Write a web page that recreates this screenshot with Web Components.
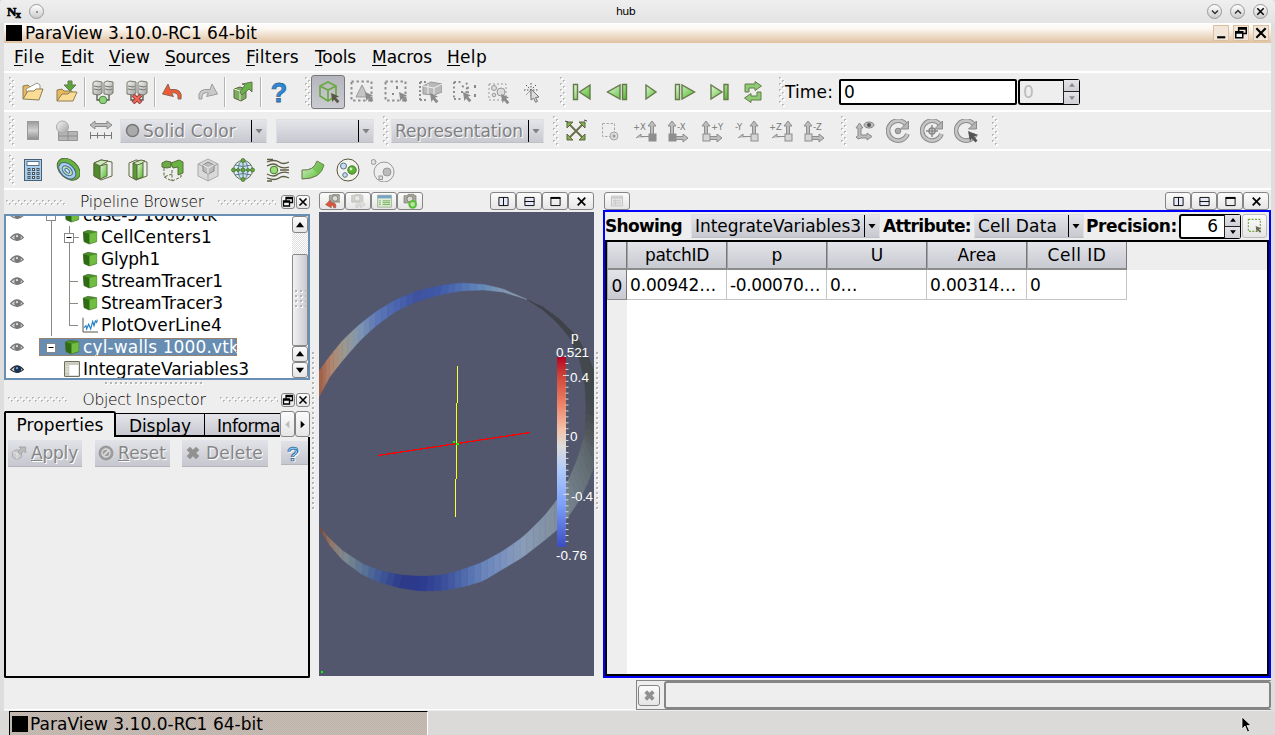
<!DOCTYPE html>
<html lang="en"><head><meta charset="utf-8"><title>hub</title>
<style>html,body{margin:0;height:100%;overflow:hidden;background:#dcdcdc}</style></head>
<body><app-window></app-window>
<script>
const R=(n,f)=>customElements.define(n,class extends HTMLElement{
  connectedCallback(){ if(this.shadowRoot) return; this.attachShadow({mode:'open'}).innerHTML=f(this); }
});
const A=(e,k,d='')=>e.getAttribute(k)??d;
const F='"DejaVu Sans",sans-serif';

/* ---------- icon library, 24x24 ---------- */
const G='<defs><linearGradient id="g" x2="1" y2="1"><stop offset="0" stop-color="#e4f6dc"/><stop offset="1" stop-color="#4fbb28"/></linearGradient><linearGradient id="s" x2="1" y2="1"><stop offset="0" stop-color="#f4f4f4"/><stop offset="1" stop-color="#a4a4a4"/></linearGradient></defs>';
const arrow=(x,y,c='#8b8b8b')=>`<path d="M${x} ${y}l8 3.5-3 1.2 3.4 3.6-2.2 2-3.2-3.8-1.6 2.8z" fill="${c}"/>`;
const dash='<rect x="1.5" y="1.5" width="20" height="19" fill="none" stroke="#8f8f8f" stroke-width="2" stroke-dasharray="2.4 2.6"/>';
const srv=`<g stroke="#77776c" fill="url(#s)"><path d="M2 2.500l3-1.500 6 1v11l-3 2-6-1z"/><path d="M13 2.500l3-1.500 6 1v11l-3 2-6-1z"/></g><path d="M3 6l5 1 2-1M14 6l5 1 2-1M3 9l5 1 2-1M14 9l5 1 2-1" stroke="#77776c" fill="none"/><path d="M6 15v5h12v-5" fill="none" stroke="#55554c" stroke-width="1.300"/>`;
const vp=(sx,up,lab)=>{const x=sx>0?5:19,e=sx>0?22:2;return `<g fill="#bdbdbd" stroke="#8d8d8d"><path d="M${x-1.5} 16V7h-2.500l4-5 4 5h-2.500v9z"/><path d="M${x} 17.500h${sx*11}v-2.500l${sx*5} 4-${sx*5} 4v-2.500h${-sx*11}z"/><rect x="${x-3}" y="15" width="7" height="7" fill="${up?'#d5d5d5':'#8e8e8e'}"/></g><text x="${sx>0?10:0}" y="11" style="font:8.500px ${F.replace(/"/g,"'")}" fill="#777">${lab}</text>`};
const cube=(x='')=>`<g stroke="#5d6b3c"><path d="M3 5l7-3 11 2v14l-11 4-7-4z" fill="none"/>${x}</g>`;
const rot=`<path d="M20 5.500A10 10 0 1 0 21.500 15" fill="none" stroke="#8b8b8b" stroke-width="4.600"/><path d="M20 5.500A10 10 0 1 0 21.500 15" fill="none" stroke="#c4c4c4" stroke-width="2.600"/><path d="M22.500 2v8h-8z" fill="#b5b5b5" stroke="#8b8b8b"/>`;
const cam='<path d="M3 4h5l1-2h9v2h3v11H3z" fill="#aaa99c" stroke="#77776c"/><circle cx="12" cy="9" r="4.500" fill="#ddd" stroke="#66665c"/>';
const I={
open:'<path d="M2 19V6l5-1 2 2h8v3" fill="#e9b95c" stroke="#8b7d57"/><path d="M5 9l11-6 3 2v9L7 18z" fill="#fff" stroke="#99978a"/><path d="M2 19l5-8h6l2-2h7l-4 11z" fill="#fbdc95" stroke="#8b7d57"/>',
load:'<path d="M2 21V10l5-1 2 2h8v3" fill="#e9b95c" stroke="#8b7d57"/><path d="M2 21l5-7h6l2-2h7l-4 9z" fill="#fbdc95" stroke="#8b7d57"/><path d="M13 1h4v4h4l-6 6-6-6h4z" fill="#57a83b" stroke="#6b7550"/>',
conn:srv+'<circle cx="12" cy="20" r="3.800" fill="#8bd27a" stroke="#4c8142"/>',
disc:srv+'<path d="M8 15l8 8M16 15l-8 8" stroke="#8d4239" stroke-width="4"/><path d="M8.500 15.500l7 7M15.500 15.500l-7 7" stroke="#ef6659" stroke-width="2.400"/>',
undo:'<path d="M20 19Q22 8 9 9.500L7 4 1.500 14l11 2.500L10.500 13Q18 11.500 17 19z" fill="#ee5a33" stroke="#8a6553"/>',
redo:'<path d="M4 19Q2 8 15 9.500L17 4l5.500 10-11 2.500L13.500 13Q6 11.500 7 19z" fill="#c9c9c9" stroke="#9c9c9c"/>',
expo:'<path d="M3 9l6-2 6 2v9l-5 3-7-3z" fill="#7cab60" stroke="#5b6941"/><path d="M9 11v9M3 9l6 2 6-2" stroke="#e4eede" fill="none"/><path d="M9 12l5-7-3-1 10-2v10l-3-3-7 6z" fill="#67b548" stroke="#66704f"/>',
help:'<text x="12" y="22" text-anchor="middle" style="font:bold 27px \'Liberation Sans\',sans-serif" fill="#258de8" stroke="#40627d" stroke-width=".8">?</text>',
selon:'<path d="M4 6l8-4 8 4v10l-8 5-8-5zM4 6l8 4 8-4M12 10v10" fill="none" stroke="#69a83d" stroke-width="1.600"/>'+arrow(15,13,'#595847'),
seltri:dash+'<path d="M12 5l6 12H6z" fill="#c4c4c4" stroke="#999"/>'+arrow(15,12),
selrect:dash+'<path d="M12 6h2v3h-2zM8 13h2v2H8z" fill="#888"/>'+arrow(15,12),
selfr:'<path d="M2 2h6M2 2v18M2 20h8" stroke="#8f8f8f" stroke-width="2" stroke-dasharray="2 2" fill="none"/><path d="M5 6l8-4 11 2v8l-8 3-11-1z" fill="#b9b9b9" stroke="#999"/><path d="M5 6l11 2 8-4M16 8v7M10 4v10" stroke="#eee" fill="none"/>'+arrow(12,13),
selpt:'<path d="M2 2h7M2 2v18M2 19h8M10 6l8 4M9 12h6M14 3l2 2v10" stroke="#8f8f8f" stroke-width="2" stroke-dasharray="2 2.500" fill="none"/><path d="M22 5h2v3h-2zM22 14h2v3h-2z" fill="#888"/>'+arrow(11,12),
selblk:'<rect x="3" y="4" width="17" height="16" fill="none" stroke="#999" stroke-dasharray="2 2"/><circle cx="8" cy="8" r="2.500" fill="#ddd" stroke="#999"/><circle cx="15" cy="12" r="4" fill="#ddd" stroke="#999"/><circle cx="8" cy="15" r="1.800" fill="#ddd" stroke="#999"/>'+arrow(15,14),
selpick:'<path d="M10 3v14M3 10h14M5 5l10 10M15 5L5 15" stroke="#555" stroke-dasharray="1.500 1.500"/><path d="M10 9l8 8-3.500.5 2 4-2 .7-1.700-4L10 20z" fill="#ddd" stroke="#777"/>',
first:'<path d="M2.500 4.500h4v15h-4zM19 5v14L8.500 12z" fill="url(#g)" stroke="#667a4b" stroke-width="1.400"/>',
prev:'<path d="M17.500 4.500h4v15h-4zM15 5v14L2.500 12z" fill="url(#g)" stroke="#667a4b" stroke-width="1.400"/>',
play:'<path d="M7 5v14l10-7z" fill="url(#g)" stroke="#667a4b" stroke-width="1.400"/>',
next:'<path d="M2.500 4.500h4v15h-4zM9 5v14l12.500-7z" fill="url(#g)" stroke="#667a4b" stroke-width="1.400"/>',
last:'<path d="M17 4.500h4v15h-4zM4 5v14l11-7z" fill="url(#g)" stroke="#667a4b" stroke-width="1.400"/>',
loop:'<path d="M4 12V4h10V1.500L20.500 6 14 10.500V8H8v4zM20 12v8H10v2.500L3.500 18 10 13.500V16h6v-4z" fill="#8ecb74" stroke="#667a4b"/>',
bar:'<defs><linearGradient id="b" y2="1" x2="0"><stop stop-color="#9c9c9c"/><stop offset=".5" stop-color="#d0d0d0"/><stop offset="1" stop-color="#8c8c8c"/></linearGradient></defs><rect x="6.500" y="2.500" width="11" height="18" fill="url(#b)" stroke="#999"/>',
edit:'<path d="M3.500 12.500h19v9h-19z" fill="#b5b5b5" stroke="#959595"/><path d="M13 13v8M4 17h18" stroke="#8b8b8b"/><circle cx="7.500" cy="8" r="6" fill="url(#s)" stroke="#aaa"/>',
scale:'<path d="M1 6l5-4v2.500h12V2l5 4-5 4V7.500H6V10z" fill="#bbb" stroke="#8b8b8b"/><path d="M1 16.500h22M1.500 13v7M8.500 13.500v6M15.500 13.500v6M22.500 13v7" stroke="#777"/>',
reset:'<path d="M6 6l12 12M18 6L6 18" stroke="#6c704f" stroke-width="2"/><path d="M3 3h6L3 9zM21 3v6l-6-6zM3 21v-6l6 6zM21 21h-6l6-6z" fill="#7fb347" stroke="#5e6545"/><path d="M1 2l3 1M20 1l3 1" stroke="#444"/>',
zoomb:'<rect x="3.500" y="4.500" width="12" height="13" fill="none" stroke="#a9a9a9" stroke-dasharray="2.500 1.500"/><circle cx="15" cy="17" r="4" fill="#ddd" stroke="#a5a5a5"/><circle cx="15" cy="17" r="1.500" fill="#999"/>',
px:vp(-1,0,'+X'),mx:vp(1,0,'-X'),py:vp(1,1,'+Y'),my:vp(-1,1,'-Y'),pz:vp(-1,1,'+Z'),mz:vp(1,1,'-Z'),
axes:'<g fill="#bbb" stroke="#8b8b8b"><path d="M6 17V9H4l3.500-5L11 9H9v7h6v-2l5 3.500-5 3.500v-2H9l-3 1-2-2z"/></g><ellipse cx="17" cy="6" rx="5" ry="3" fill="#bbb" stroke="#888"/><circle cx="17" cy="6" r="2" fill="#555"/>',
rc:rot+'<circle cx="12" cy="12" r="2.800" fill="#aaa" stroke="#888"/>',
rp:rot+'<circle cx="12" cy="12" r="3" fill="none" stroke="#888" stroke-width="1.500"/><path d="M12 6v12M6 12h12" stroke="#888" stroke-width="1.500"/>',
rk:rot+'<path d="M14 12l10 4-4 1.500 3.500 4-2 2-4-4-1.500 3z" fill="#555"/>',
calc:'<rect x="3.500" y="1.500" width="17" height="21" fill="#a9cee9" stroke="#47607a"/><rect x="6" y="3.500" width="12" height="4" fill="#fff" stroke="#5d7287"/><path d="M6.500 11.500h12M6.500 15.500h12M6.500 19.500h12" stroke="#46535f" stroke-width="3" stroke-dasharray="3 1.500"/><path d="M7.500 11.500h11M7.500 15.500h11M7.500 19.500h11" stroke="#fff" stroke-dasharray="1 3.500"/>',
contour:'<g transform="rotate(42 12 12)"><ellipse cx="12" cy="11" rx="13" ry="9" fill="#67b541" stroke="#516c38"/><ellipse cx="12" cy="13" rx="10" ry="6.500" fill="#a9cdea" stroke="#47627d"/><ellipse cx="12" cy="13" rx="6" ry="3.800" fill="#c8e2a8" stroke="#3c70a8"/><ellipse cx="12" cy="13" rx="3" ry="1.500" fill="#dcebf7" stroke="#3c70a8"/></g>',
clip:cube('<path d="M3 5l6 3v13l-6-3z" fill="#4e8b2b"/><path d="M3 5l7-3 7 1-8 5z" fill="#cde8bd"/><path d="M9 8l7-2v12l-7 3z" fill="url(#g)"/>'),
slice:cube('<path d="M7 5l8-3 4 1-7 5z" fill="#cde8bd"/><path d="M7 5l4 2v15l-4-2z" fill="#5a9b33"/><path d="M11 7l6-2v14l-6 2z" fill="url(#g)"/>'),
thr:'<g stroke="#5d6b3c"><path d="M3 10v9l8 4 9-4v-5M11 12v11M11 16l-8 3" fill="none" stroke-dasharray="3 1.500"/><path d="M1 5l4-2 5 1v5l-4 1-5-1z" fill="#6aac45"/><path d="M10 5l8-3 4 2v11l-5 2V9l-5 1z" fill="#67b541"/></g>',
extr:'<path d="M2 6l10-5 10 5v12l-10 5-10-5z" fill="#d9d9d9" stroke="#aaa"/><path d="M2 6l10 5 10-5M12 11v12" fill="none" stroke="#a8a8a8"/><path d="M7 7l5-3 6 3v6l-6 3-5-3z" fill="#bbb" stroke="#888"/><path d="M7 7l5 3 6-3M12 10v6" fill="none" stroke="#eee"/>',
glyph:'<circle cx="12" cy="12" r="9.500" fill="#e0eef7" stroke="#5d6b4c"/><ellipse cx="12" cy="12" rx="5" ry="9.500" fill="#c1dced" stroke="#5b7a8c"/><path d="M1 12h22M12 2v20" stroke="#5d7a6c"/><path d="M4 7q8 3 16 0M4 17q8-3 16 0" stroke="#5b7a8c" fill="none"/><g fill="#63ad38" stroke="#3d6428" stroke-width=".7"><circle cx="12" cy="2.500" r="2"/><circle cx="12" cy="12" r="2"/><circle cx="12" cy="21.500" r="2"/><circle cx="2.500" cy="12" r="2"/><circle cx="21.500" cy="12" r="2"/><circle cx="7" cy="12" r="1.500"/><circle cx="17" cy="12" r="1.500"/></g>',
stream:'<path d="M1 4q8-3 12 0t10 0M1 8q7-4 11 0 5 3 11 1M1 20q8 3 12 0t10 0M1 16q7 4 11 0 5-3 11-1M14 12h9M1 1.500h6M1 23h5" fill="none" stroke="#5d5d43" stroke-width="1.300"/><circle cx="8" cy="12" r="3.800" fill="#9bdc79" stroke="#3f7c29"/>',
warp:'<path d="M1 12q12 1 15-9l7 4q-3 14-22 14z" fill="url(#g)" stroke="#66704b"/><path d="M16 3l7 4q-2 6-6 9l-6-6q4-2 5-7z" fill="#67b541" opacity=".6"/>',
group:'<circle cx="12" cy="12" r="11" fill="#f4f4ee" stroke="#55553f"/><circle cx="7.500" cy="8" r="3" fill="#c6def0" stroke="#5a7184"/><circle cx="16" cy="12" r="4.200" fill="#57b830" stroke="#55703b"/><circle cx="9" cy="17" r="2.300" fill="#c6def0" stroke="#5a7184"/><circle cx="15" cy="11" r="1.400" fill="#cdeebd"/>',
level:'<circle cx="13" cy="14" r="10" fill="none" stroke="#999"/><circle cx="2.500" cy="4" r="2.500" fill="#ddd" stroke="#999"/><circle cx="16" cy="14" r="4" fill="#bbb" stroke="#999"/><rect x="8" y="18" width="3.500" height="3.500" fill="#ddd" stroke="#999"/>',
box:'<path d="M2 4.500L9 2l13 2v15l-11 3.500L3 19z" fill="#4a9127" stroke="#45672f"/><path d="M11 7.500L22 5v13.500L11 22z" fill="#70bd42"/><path d="M2 4.500l9 3v15L3 18.500z" fill="#2f6a15"/>',
plot:'<path d="M1.500 1v21.500H24" fill="none" stroke="#555541" stroke-width="1.500"/><path d="M3 16l3-3 1 5 3-7 3 7 3-11 2 6 2-7 2 2 1-4" fill="none" stroke="#2b83c6" stroke-width="1.800"/>',
sheet:'<path d="M1 1h22v22H1z" fill="#fff" stroke="#55553f" stroke-width="1.500"/><path d="M2 2h6v20H2zM8 2h14v4H8z" fill="#c9c9bd"/><path d="M3 8h4M3 12h4M3 16h4" stroke="#fff"/>',
eye:'<path d="M1 13Q12 0 23 13 12 23 1 13z" fill="#d5d5d5" stroke="#777" stroke-width="2"/><circle cx="13" cy="12.500" r="5.500" fill="#777"/><circle cx="12" cy="10.500" r="2" fill="#ddd"/>',
eyeon:'<path d="M1 13Q12 0 23 13 12 23 1 13z" fill="#d5d5d5" stroke="#333" stroke-width="2"/><circle cx="13" cy="12.500" r="6" fill="#1b3050"/><circle cx="12" cy="10.500" r="2" fill="#67a0dd"/>',
x:'<path d="M5 5l14 14M19 5L5 19" stroke="#000" stroke-width="3.200"/>',
gx:'<path d="M5 5l14 14M19 5L5 19" stroke="#919191" stroke-width="7"/>',
restore:'<path d="M8 3h13v10H8zM8 5h13" fill="none" stroke="#000" stroke-width="2.600"/><path d="M3 10h12v10H3zM3 12h12" fill="#f4f4f4" stroke="#000" stroke-width="2.600"/>',
min:'<path d="M4 19h15" stroke="#000" stroke-width="4"/>',
sph:'<path d="M3.500 4.500h17v15h-17zM12 4v16" fill="#e6e9f8" stroke="#000" stroke-width="1.700"/>',
spv:'<path d="M3.500 4.500h17v15h-17zM3 12h18" fill="#e6e9f8" stroke="#000" stroke-width="1.700"/>',
max:'<path d="M3.500 4.500h17v15h-17z" fill="none" stroke="#000" stroke-width="1.700"/><path d="M3 5.500h18" stroke="#000" stroke-width="3.500"/>',
camu:'<g transform="translate(4 -2)">'+cam+'</g><path d="M17 22q2-9-7-8l-2-4-7 7 9 5v-4q4-1 4 4z" fill="#e05438" stroke="#8a5548"/>',
camr:'<g opacity=".45"><g transform="translate(-2 -2)">'+cam+'</g><path d="M8 22q-2-9 7-8l2-4 6 7-8 5v-4q-4-1-4 4z" fill="#ccc" stroke="#999"/></g>',
sett:'<path d="M1 2h22v19H1z" fill="#dff0d4" stroke="#819873"/><path d="M1 2h22v5H1z" fill="#79a3c7"/><path d="M9 11h12M9 14h12M9 17h12" stroke="#6ea858" stroke-width="1.500"/><path d="M3 11h3M3 14h3M3 17h3" stroke="#99b38b" stroke-width="2"/>',
capt:cam+'<circle cx="16" cy="17" r="5" fill="#b6e69f" stroke="#5cbd3d" stroke-width="3"/>',
gsheet:'<path d="M2.500 3.500h19v17h-19z" fill="#e7e7e7" stroke="#aaa"/><path d="M3 5h18v3H3z" fill="#ccc"/><path d="M5 11h14M5 14h14M5 17h14M9 9v10" stroke="#bbb"/>',
sel:'<rect x="2" y="2" width="18" height="18" fill="none" stroke="#76a843" stroke-width="1.700" stroke-dasharray="3 2"/>'+arrow(13,12,'#66664f'),
gexpo:'<path d="M2 10l7-3 7 3v8l-7 4-7-4z" fill="#ccc" stroke="#999"/><path d="M2 10l7 3 7-3M9 13v9" stroke="#eee" fill="none"/><path d="M10 10l5-5-3-2h10v9l-3-3-5 5z" fill="#bbb" stroke="#999"/>',
no:'<circle cx="12" cy="12" r="10.500" fill="#9d9d9d" stroke="#888"/><circle cx="12" cy="12" r="6" fill="none" stroke="#ddd" stroke-width="2"/><path d="M8 16l9-9" stroke="#ddd" stroke-width="2.500"/>',
dn:'<path d="M5 8h14l-7 9z" fill="currentColor"/>',up:'<path d="M5 16h14l-7-9z" fill="currentColor"/>',
lt:'<path d="M16 4v16L7 12z" fill="currentColor"/>',rt:'<path d="M8 4v16l9-8z" fill="currentColor"/>',
chd:'<path d="M6 9l6 6 6-6" fill="none" stroke="#333" stroke-width="3"/>',chu:'<path d="M6 15l6-6 6 6" fill="none" stroke="#333" stroke-width="3"/>',
dot:'<circle cx="12" cy="12" r="2" fill="#777"/>'
};
const svg=(n,s=24)=>`<svg width="${s}" height="${s}" viewBox="0 0 24 24">${/#[gs]\)/.test(I[n])?G:''}${I[n]}</svg>`;

R('ui-icon',e=>`<style>:host{display:inline-flex;align-items:center;justify-content:center;flex:none}svg{display:block}</style>${svg(A(e,'n'),A(e,'s',24))}`);
R('tool-icon',e=>`<style>:host{display:flex;box-sizing:border-box;flex:none;width:${A(e,'w',34)}px;height:34px;align-items:center;justify-content:center}:host([on]){background:linear-gradient(#b5b6bd,#cbccd2);border:1px solid #77777c;border-radius:3px}svg{display:block}</style>${svg(A(e,'n'))}`);
const dots=(w,h)=>`<svg width="${w}" height="${h}"><defs><pattern id="p" width="6" height="6" patternUnits="userSpaceOnUse"><path d="M0 0h2v2H0zM3 3h2v2H3z" fill="#b9b9b9"/><path d="M1 1h2v2H1zM4 4h2v2H4z" fill="#fff"/></pattern></defs><rect width="${w}" height="${h}" fill="url(#p)"/></svg>`;
R('dot-grip',e=>`<style>:host{display:block;flex:none;width:${A(e,'w',6)}px;height:${A(e,'h',30)}px}svg{display:block}</style>${dots(A(e,'w',6),A(e,'h',30))}`);
R('dot-line',e=>{const w=A(e,'w',5),h=A(e,'h',5);return `<style>:host{display:block;flex:none;width:${w}px;height:${h}px}svg{display:block}</style><svg width="${w}" height="${h}"><defs><pattern id="q" width="5" height="5" patternUnits="userSpaceOnUse"><path d="M0 0h2v2H0z" fill="#b4b4b4"/><path d="M2 1h1v2H1V2h1z" fill="#fff"/></pattern></defs><rect width="${w}" height="${h}" fill="url(#q)"/></svg>`});
R('tool-sep',()=>`<style>:host{display:block;flex:none;box-sizing:border-box;width:2px;height:30px;background:#b4b4b4;border-right:1px solid #fff}</style>`);
R('sp-ace',e=>`<style>:host{display:block;flex:none;width:${A(e,'w')}px}</style>`);
R('tool-bar',()=>`<style>:host{display:flex;align-items:center;box-sizing:border-box;height:39px;border-bottom:2px solid #fff;border-image:linear-gradient(#b4b4b4 50%,#fff 50%) 2;border-width:0 0 2px;padding-left:5px}</style><slot></slot>`);
R('combo-box',e=>`<style>:host{display:flex;flex:none;box-sizing:border-box;width:${A(e,'w')}px;height:24px;align-items:center;background:linear-gradient(#e4e5ea,#c8c9d0);border:1px solid #dfe0e4;border-bottom-color:#bfc0c6;color:#000}:host([off]){color:#808080;text-shadow:1px 1px 0 #fff}.t{flex:1;display:flex;align-items:center;padding-left:${A(e,'p',3)}px;gap:3px;min-width:0}.a{width:14px;height:22px;border-left:1px solid #000;display:flex;align-items:center;justify-content:center}</style><div class="t"><slot></slot></div><div class="a">${svg('dn',12)}</div>`);
R('view-button',e=>`<style>:host{display:flex;flex:none;box-sizing:border-box;width:${A(e,'w',26)}px;height:${A(e,'h',18)}px;border:1px solid #858585;border-radius:3px;background:linear-gradient(#fbfbfb,#e6e6e6);align-items:center;justify-content:center;color:#000}:host([off]){color:#bbb}svg{display:block}</style>${svg(A(e,'n'),A(e,'s',13))}`);
R('push-button',e=>`<style>:host{display:flex;flex:none;box-sizing:border-box;width:${A(e,'w')}px;height:${A(e,'h',27)}px;align-items:center;padding-left:3px;gap:4px;background:linear-gradient(#e2e3e8,#c6c7cf);border-bottom:1px solid #b4b5bb;color:#858585;text-shadow:1px 1px 0 #fff}svg{display:block}</style>${svg(A(e,'n'),A(e,'s',16))}<slot></slot>`);
R('spin-box',e=>`<style>:host{display:flex;flex:none;box-sizing:border-box;width:${A(e,'w')}px;height:${A(e,'h',26)}px;border:2px solid #000;border-radius:3px;background:${A(e,'bg','#fff')};color:${A(e,'c','#000')}}.v{flex:1;display:flex;align-items:center;justify-content:${A(e,'j','flex-start')};padding:0 3px}.b{width:15px;margin:-1px -1px -1px 0;display:grid;grid-template-rows:1fr 1fr;gap:1px;background:#222;border-left:1px solid #222;color:${A(e,'ac','#000')}}.b div{background:linear-gradient(#e4e4e9,#cfd0d6);display:flex;align-items:center;justify-content:center;min-height:0}</style><div class="v"><slot></slot></div><div class="b"><div>${svg('up',10)}</div><div>${svg('dn',10)}</div></div>`);
R('dock-title',e=>`<style>:host{display:flex;align-items:center;height:${A(e,'h',24)}px;padding-left:${A(e,'l',2)}px}.t{width:153px;display:flex;justify-content:center;font-weight:200;font-size:15.500px}</style><dot-grip w="60" h="5"></dot-grip><div class="t"><slot></slot></div><dot-grip w="58" h="5"></dot-grip><sp-ace w="${A(e,'g',5)}"></sp-ace><view-button w="14" h="14" n="restore" s="12"></view-button><sp-ace w="1"></sp-ace><view-button w="14" h="14" n="x" s="12"></view-button>`);

/* one pipeline row: guide lines, optional expander, icon, name */
R('tree-row',e=>{
  const d=A(e,'d'),bx=+A(e,'box',0),ix=+A(e,'ix');
  return `<style>:host{display:flex;height:22px;align-items:center}svg{display:block;flex:none}.e{width:${33-0}px;padding-left:4px;box-sizing:border-box}.r{display:flex;align-items:center;height:18px;box-sizing:border-box;margin-right:auto}:host([sel]) .r{background:linear-gradient(#678db2,#678db2);color:#fff;outline:1px dotted #bb7a3c;outline-offset:-1px;width:198px}.n{padding-left:3px}.i{width:16px}</style>
  <div class="e">${svg(e.hasAttribute('vis')?'eyeon':'eye',14)}</div><div class="r"><svg width="${ix-33-6}" height="22" viewBox="39 0 ${ix-39-6} 22"><path d="${d}" fill="none" stroke="#8a8a84" shape-rendering="crispEdges"/>${bx?`<path d="M${bx-4.5} 7h9v9h-9z" fill="#fff" stroke="#888" shape-rendering="crispEdges"/><path d="M${bx-2.5} 11.500h5" stroke="#000"/>`:''}</svg><div class="i">${svg(A(e,'i','box'),16)}</div><div class="n"><slot></slot></div></div>`});

R('scroll-bar',()=>`<style>:host{display:flex;flex-direction:column;width:16px;background:repeating-conic-gradient(#ddd 0 25%,#fff 0 50%) 0 0/2px 2px}.s{height:21px}.th{flex:1;box-sizing:border-box;border:1px solid #8a8a8a;border-radius:2px;background:linear-gradient(90deg,#f2f2f4,#c9cad0);display:flex;align-items:center;justify-content:center}</style><view-button w="16" h="17" n="up" s="14"></view-button><div class="s"></div><div class="th"><dot-line w="11" h="20"></dot-line></div><view-button w="16" h="16" n="up" s="14"></view-button><view-button w="16" h="16" n="dn" s="14"></view-button>`);

/* render view */
const lerp=(a,b,t)=>a+(b-a)*t;
function at(ps,t){const f=t*(ps.length-1),i=Math.min(ps.length-2,f|0),u=f-i;return ps[i].map((v,k)=>lerp(v,ps[i+1][k],u));}
function band(o,n,c,k){let s='';for(let i=0;i<k;i++){const a=at(o,i/k),b=at(o,(i+1)/k),d=at(n,i/k),e=at(n,(i+1)/k),q=at(c,(i+.5)/k).map(Math.round);
  s+=`<path d="M${a}L${b}L${e}L${d}z" fill="rgb(${q})" stroke="rgb(${q})" stroke-width=".4"/>`}return s;}
const outA=[[319,371],[330,356],[343,340],[360,324],[377,311],[397,299],[417,291],[440,285.5],[460,283],[483,284.300],[503,289],[527,299.500]];
const inA=[[319,397],[330,376.500],[343,360],[360,340.500],[377,325],[397,310.500],[417,301.500],[437,295.500],[460,291],[483,290],[503,292],[527,299.500]];
const colA=[[156,92,66],[180,130,105],[158,152,140],[126,150,180],[92,120,182],[75,100,176],[62,82,160],[64,88,168],[80,112,178],[100,138,185],[130,152,178],[140,155,165]];
const outB=[[527,299.500],[543,307],[560,319.500],[577,336.500],[590,360],[597,380],[601,410],[600,438],[594,467],[587,485],[577,504],[567,518.300],[557,530],[543,541.500],[523,557],[503,569],[483,581],[463,587],[443,590.500],[420,591],[400,588],[380,582.500],[363,575],[343,560.500],[330,545.500],[319,527.500]];
const inB=[[527,299.500],[543,310],[557,322.500],[570,338],[580,361],[585,385],[586,408],[585,430],[583.300,440],[577,460],[568.500,480],[562,490],[557,500],[543,517.500],[523,537],[503,551],[483,562],[463,569.500],[443,575],[423,576.300],[403,575.300],[383,571.500],[363,564],[343,551],[330,539],[319,526.500]];
const colB=[[64,66,72],[62,65,72],[62,66,70],[64,69,73],[66,72,76],[65,72,75],[68,74,78],[80,86,90],[92,102,108],[103,114,122],[113,125,135],[122,135,145],[128,143,156],[132,148,168],[138,157,184],[122,146,190],[104,132,188],[80,106,172],[58,78,156],[44,58,142],[44,58,136],[62,86,152],[90,116,152],[130,138,142],[150,118,100],[128,70,46]];
R('render-view',()=>{let t='';for(let y=363.5;y<547;y+=5.93)t+=`M565.500 ${y}h3`;
 return `<style>:host{display:block;width:275px;height:464px}svg{display:block}text{font-family:"Liberation Sans",Arial,sans-serif;font-size:13.500px;fill:#fff}</style><svg width="275" height="464" viewBox="319 212 275 464"><defs><linearGradient id="c" x2="0" y2="1"><stop stop-color="#b40426"/><stop offset=".1" stop-color="#cf4538"/><stop offset=".25" stop-color="#ee8468"/><stop offset=".38" stop-color="#f3c1a8"/><stop offset=".47" stop-color="#dddcdb"/><stop offset=".6" stop-color="#afc9fc"/><stop offset=".78" stop-color="#7b9ff9"/><stop offset="1" stop-color="#3b4cc0"/></linearGradient></defs><path d="M319 212h275v464H319z" fill="#52576e"/>${band(outA,inA,colA,34)}${band(outB,inB,colB,76)}
 <g shape-rendering="crispEdges" fill="none"><path d="M457.500 366v37M456.500 403v76M455.500 479v38" stroke="#ff0"/><path d="M457.500 366v37M455.500 479v38" stroke="#fff" opacity=".2"/><path d="M378 455.500L530 432.500" stroke="red" stroke-width="1.300"/><path d="M453 442h2M456 444h3M321 672h2" stroke="#0f0" stroke-width="1.500"/></g>
 <path d="M557 357h9v190h-9z" fill="url(#c)"/><path d="${t}M563 375.500h6M563 434.500h6M563 494.500h6" stroke="#d8d8d8"/>
 <text x="571" y="341" textLength="8">p</text><text x="556" y="357" textLength="33">0.521</text><text x="570" y="382" textLength="19">0.4</text><text x="570" y="441">0</text><text x="571" y="501" textLength="22">-0.4</text><text x="556" y="560" textLength="31">-0.76</text></svg>`});

R('data-table',()=>`<style>:host{display:grid;grid-template-columns:20px repeat(5,100px) 1fr;grid-template-rows:28px 30px 1fr;box-sizing:border-box;border:solid #000;border-width:2px 2px 2px 2px;background:#fff;flex:1;min-height:0}
 div{box-sizing:border-box;display:flex;align-items:center;overflow:hidden}.h{background:linear-gradient(#e3e4e9,#c9cad1);border-right:1px solid #77777a;border-bottom:2px solid #8b8b8b;border-left:1px solid #a5a5a5;justify-content:center}.c{border-right:1px solid #c4c4c4;border-bottom:1px solid #c4c4c4;padding-left:3px}.g{background:#eee}.r{border-bottom-width:1px;padding-top:3px}</style>
 <div class="h"></div>${[['patchID',64],['p',11],['U',12],['Area',39],['Cell ID',59]].map(([a,w])=>`<div class="h"><fit-text w="${w}">${a}</fit-text></div>`).join('')}<div class="g"></div>
 <div class="h r"><fit-text w="10">0</fit-text></div>${[['0.00942…',86],['-0.00070…',90],['0…',27],['0.00314…',86],['0',10]].map(([a,w])=>`<div class="c"><fit-text w="${w}">${a}</fit-text></div>`).join('')}<div></div><div class="g"></div>`);

R('menu-item',e=>`<style>:host{display:block;flex:none;width:${A(e,'w')}px}</style><slot></slot>`);

R('pipeline-browser',()=>`<style>:host{display:flex;box-sizing:border-box;height:166px;width:306px;border:2px solid #6a8fb5;background:#fff;overflow:hidden}.t{flex:1;margin-top:-12px;min-width:0}scroll-bar{flex:none}</style><div class="t">
 <tree-row ix="64" box="48" d="M48 16v6"><fit-text w="134">case-5 1000.vtk</fit-text></tree-row>
 <tree-row ix="82" box="66" d="M48.500 0v22M66.500 0v22M71 11.500h5"><fit-text w="111">CellCenters1</fit-text></tree-row>
 <tree-row ix="82" d="M48.500 0v22M66.500 0v22M84 0v4"><fit-text w="59">Glyph1</fit-text></tree-row>
 <tree-row ix="82" d="M48.500 0v22M66.500 0v22M66 11.500h9"><fit-text w="122">StreamTracer1</fit-text></tree-row>
 <tree-row ix="82" d="M48.500 0v22M66.500 0v22M66 11.500h9"><fit-text w="122">StreamTracer3</fit-text></tree-row>
 <tree-row ix="82" i="plot" d="M48.500 0v22M66.500 0v12M66 11.500h9"><fit-text w="121">PlotOverLine4</fit-text></tree-row>
 <tree-row ix="64" box="48" sel d="M53 11.500h4"><fit-text w="156">cyl-walls 1000.vtk</fit-text></tree-row>
 <tree-row ix="64" i="sheet" vis d="M66.500 0v4"><fit-text w="166">IntegrateVariables3</fit-text></tree-row></div><scroll-bar></scroll-bar>`);

R('object-inspector',()=>`<style>:host{display:flex;flex-direction:column;width:306px;height:267px}.tabs{display:flex;height:26px;align-items:flex-end;flex:none}.tab{box-sizing:border-box;display:flex;align-items:center;justify-content:center;height:24px;background:linear-gradient(#e3e4e9,#c9cad1);border:solid #000;border-width:1px 1px 2px 0;padding-top:2px;overflow:hidden}.on{height:26px;background:#eee;border-width:2px 2px 0 2px;border-radius:2px 3px 0 0;width:112px;padding:0}.body{flex:1;box-sizing:border-box;border:solid #000;border-width:0 2px 2px;padding:3px 0 0 2px;border-radius:0 0 2px 2px}.row{display:flex;align-items:flex-start}</style>
 <div class="tabs"><div class="tab on"><fit-text w="87">Properties</fit-text></div><div class="tab" style="width:89px"><fit-text w="62">Display</fit-text></div><div class="tab" style="width:75px;justify-content:flex-start;padding-left:12px;border-right:0"><fit-text w="63">Informa</fit-text></div><view-button w="15" h="26" n="lt" s="11" off></view-button><view-button w="15" h="26" n="rt" s="11"></view-button></div>
 <div class="body"><div class="row"><push-button w="74" n="gexpo"><fit-text w="47"><u>A</u>pply</fit-text></push-button><sp-ace w="13"></sp-ace><push-button w="75" n="no"><fit-text w="48"><u>R</u>eset</fit-text></push-button><sp-ace w="12"></sp-ace><push-button w="86" n="gx" style="gap:5px"><fit-text w="57">Delete</fit-text></push-button><sp-ace w="13"></sp-ace><push-button w="27" h="24" n="help" s="18" style="margin-top:1px"></push-button></div></div>`);

const ic=(l)=>l.split(' ').map(n=>n=='|'?'<tool-sep></tool-sep>':n[0]=='_'?`<sp-ace w="${n.slice(1)}"></sp-ace>`:n=='G'?'<dot-grip></dot-grip>':`<tool-icon n="${n.split(':')[0]}" w="${n.split(':')[1]||34}"${n=='selon'?' on':''}></tool-icon>`).join('');
const winb='<view-button n="sph"></view-button><view-button n="spv"></view-button><view-button n="max"></view-button><view-button n="x"></view-button>';

R('app-window',()=>`<style>
:host{display:flex;flex-direction:column;width:1275px;height:735px;box-sizing:border-box;font:17px/20px ${F};color:#000;background:#dedede;overflow:hidden;position:relative}
.host{height:23px;display:flex;align-items:center;background:linear-gradient(#efefef,#e3e3e3);font-size:11px;border-radius:4px 4px 0 0;flex:none}
.rb{width:15px;height:15px;box-sizing:border-box;border:1px solid #999;border-radius:50%;background:linear-gradient(#fff,#ccc);display:flex;align-items:center;justify-content:center;flex:none}
.win{margin:0 4px;height:688px;background:#eee;display:flex;flex-direction:column;flex:none}
.pt{height:20px;display:flex;align-items:center;background:linear-gradient(#fff,#fbf6f0 30%,#e0c1a0);flex:none}
.sq{width:16px;height:16px;background:#000;flex:none}
.tb{width:16px;height:16px;background:#f2e6da;border:1px solid #dcbf9f;box-sizing:border-box;display:flex;align-items:center;justify-content:center;margin-right:4px}
.menu{height:29px;box-sizing:content-box;display:flex;align-items:center;padding-left:10px;border-bottom:2px solid #b4b4b4;border-image:linear-gradient(#b4b4b4 50%,#fff 50%) 2;border-width:0 0 2px;height:28px;flex:none}
.time{box-sizing:border-box;width:178px;height:26px;border:2px solid #000;border-radius:2px;background:#fff;display:flex;align-items:center;padding-left:3px}
.main{display:flex;height:488px;flex:none}
.left{width:306px;flex:none}.split{width:9px;display:flex;align-items:center;justify-content:center;flex:none;padding-bottom:5px;padding-top:0}
.vh{display:flex;height:18px;padding:2px 0;flex:none}.gap{flex:1}
.mid{width:275px;flex:none}.right{flex:1;display:flex;flex-direction:column;min-width:0}
.tv{flex:1;margin-top:-2px;border:2px solid #00f;display:flex;flex-direction:column;min-height:0;background:#eee}
.tt{display:flex;height:28px;align-items:center;flex:none}b{font-weight:bold}
.status{height:32px;display:flex;flex:none;box-sizing:border-box;padding:2px 0 0 632px;border-bottom:1px solid #fff}
.pf{flex:1;display:flex;box-sizing:border-box;height:30px;border:1px solid #858585;border-right:0;padding:0;align-items:center}.pg{flex:1;height:28px;box-sizing:border-box;border:2px solid #858585;border-radius:3px;margin-left:4px}
.task{flex:1;background:#dbdad8;display:flex;padding-left:9px}.ti{width:419px;box-sizing:border-box;border:solid #000;border-width:1px 0 0 1px;border-right:1px solid #fff;background:repeating-conic-gradient(#c9beb5 0 25%,#bdb2a9 0 50%) 0 0/2px 2px;display:flex;align-items:center;padding-left:2px}
.cur{position:absolute;left:1241px;top:716px}
u{text-underline-offset:2px;text-decoration-thickness:1px}
</style>
<div class="host"><sp-ace w="7"></sp-ace><fit-text w="13" style="font:bold 13px 'Liberation Serif',serif;-webkit-text-stroke:.6px #000">N<span style="font-size:11px;position:relative;top:2px">x</span></fit-text><sp-ace w="9"></sp-ace><div class="rb"><ui-icon n="dot" s="12"></ui-icon></div><div class="gap" style="flex:0 0 572px"></div><fit-text w="19">hub</fit-text><div class="gap"></div><div class="rb"><ui-icon n="chd" s="12"></ui-icon></div><sp-ace w="8"></sp-ace><div class="rb"><ui-icon n="chu" s="12"></ui-icon></div><sp-ace w="8"></sp-ace><div class="rb"><ui-icon n="x" s="11"></ui-icon></div><sp-ace w="7"></sp-ace></div>
<div class="win">
<div class="pt"><sp-ace w="2"></sp-ace><div class="sq"></div><sp-ace w="3"></sp-ace><fit-text w="232">ParaView 3.10.0-RC1 64-bit</fit-text><div class="gap"></div><div class="tb"><ui-icon n="min" s="13"></ui-icon></div><div class="tb"><ui-icon n="restore" s="14"></ui-icon></div><div class="tb" style="margin-right:2px"><ui-icon n="x" s="16"></ui-icon></div></div>
<div class="menu">${[['File',31,47],['Edit',33,48],['View',41,56],['Sources',65,81],['Filters',53,69],['Tools',41,57],['Macros',60,75],['Help',40,45]].map(([t,w,c])=>`<menu-item w="${c}"><fit-text w="${w}"><u>${t[0]}</u>${t.slice(1)}</fit-text></menu-item>`).join('')}</div>
<tool-bar>${ic('G _1 open load | conn disc | undo redo | expo | help _9 G selon seltri selrect selfr selpt selblk selpick:36 _9 G first prev play next last loop _9 G')}<fit-text w="48">Time:</fit-text><sp-ace w="6"></sp-ace><div class="time"><fit-text w="10">0</fit-text></div><sp-ace w="1"></sp-ace><spin-box w="62" bg="#eee" c="#bbb" ac="#888"><fit-text w="10">0</fit-text></spin-box></tool-bar>
<tool-bar>${ic('G _1 bar edit scale _2')}<combo-box w="147" off p="4"><svg width="15" height="15"><circle cx="7.500" cy="7.500" r="6" fill="#aaa" stroke="#777" stroke-width="1.500"/></svg><fit-text w="93">Solid Color</fit-text></combo-box><sp-ace w="9"></sp-ace><combo-box w="98" off></combo-box><sp-ace w="9"></sp-ace><dot-grip></dot-grip><sp-ace w="2"></sp-ace><combo-box w="153" off><fit-text w="128">Representation</fit-text></combo-box>${ic('_9 G reset zoomb:35 px mx py my pz mz _9 G axes rc rp rk _9 G')}</tool-bar>
<tool-bar>${ic('G calc:35 contour:35 clip:35 slice:35 thr:35 extr:35 glyph:35 stream:35 warp:35 group:35 level:35')}</tool-bar>
<div class="main"><div class="left">
<dock-title><fit-text w="124">Pipeline Browser</fit-text></dock-title><pipeline-browser></pipeline-browser>
<div style="height:8px;padding:2px 0 0 101px;box-sizing:border-box"><dot-line w="100" h="4"></dot-line></div>
<dock-title h="23" l="4" g="3"><fit-text w="123">Object Inspector</fit-text></dock-title><object-inspector></object-inspector></div>
<div class="split"><dot-line h="160"></dot-line></div>
<div class="mid"><div class="vh"><view-button n="camu" s="15"></view-button><view-button n="camr" s="15"></view-button><view-button n="sett" s="15"></view-button><view-button n="capt" s="16"></view-button><div class="gap"></div>${winb}</div><render-view></render-view></div>
<div class="split"><dot-line h="160"></dot-line></div>
<div class="right"><div class="vh" style="padding-left:1px;padding-right:2px"><view-button n="gsheet" s="14" off></view-button><div class="gap"></div>${winb}</div>
<div class="tv"><div class="tt"><fit-text w="77"><b>Showing</b></fit-text><sp-ace w="9"></sp-ace><combo-box w="189"><fit-text w="166">IntegrateVariables3</fit-text></combo-box><sp-ace w="3"></sp-ace><fit-text w="88"><b>Attribute:</b></fit-text><sp-ace w="3"></sp-ace><combo-box w="110"><fit-text w="79">Cell Data</fit-text></combo-box><sp-ace w="2"></sp-ace><fit-text w="91"><b>Precision:</b></fit-text><sp-ace w="2"></sp-ace><spin-box w="62" h="25" j="flex-end"><fit-text w="10">6</fit-text><sp-ace w="3"></sp-ace></spin-box><sp-ace w="1"></sp-ace><view-button n="sel" w="25" h="24" s="16" style="border-color:#bbb"></view-button></div><data-table></data-table></div></div></div>
<div class="status"><div class="pf"><sp-ace w="1"></sp-ace><view-button n="gx" w="22" h="21" s="13"></view-button><div class="pg"></div></div></div>
</div>
<div class="task"><div class="ti"><div class="sq"></div><sp-ace w="2"></sp-ace><fit-text w="233">ParaView 3.10.0-RC1 64-bit</fit-text></div></div>
<svg class="cur" width="11" height="17" viewBox="0 0 11 17"><path d="M1 1v12l3-3 2.500 6 2-1L6 9.500h4z" fill="#000" stroke="#fff" stroke-width=".7"/></svg>`);

/* text with a fixed advance width: spacing is spread over its letters */
customElements.define('fit-text',class extends HTMLElement{
 connectedCallback(){ if(this.shadowRoot) return;
  this.attachShadow({mode:'open'}).innerHTML='<style>:host{display:inline-block;white-space:pre;flex:none}</style><slot></slot>';
  const w=+this.getAttribute('w'),n=[...this.textContent].length,m=this.getBoundingClientRect().width;
  if(n>1&&m) this.style.letterSpacing=((w-m)/n).toFixed(3)+'px'; }
});
</script></body></html>
